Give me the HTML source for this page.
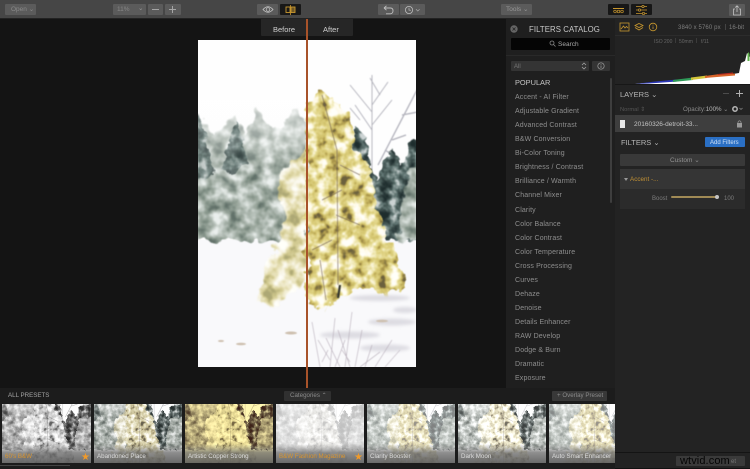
<!DOCTYPE html>
<html><head><meta charset="utf-8">
<style>
*{box-sizing:border-box;margin:0;padding:0}
html,body{width:750px;height:469px;overflow:hidden;background:#141414}
body{font-family:"Liberation Sans",sans-serif;position:relative;color:#999}
#r{position:absolute;left:0;top:0;width:750px;height:469px;filter:blur(.35px);overflow:hidden}
.a{position:absolute}
.b{position:absolute;background:#5b5b5b;border-radius:1px;height:11px;top:4px}
.t{position:absolute;white-space:nowrap;line-height:10px}
.it{position:absolute;left:515px;font-size:7px;color:#8e8e8e;line-height:10px;white-space:nowrap;letter-spacing:.02em}
.th{position:absolute;top:404px;height:59px;overflow:hidden;background:#ddd}
.th svg{position:absolute;left:0;top:0}
.th .g{position:absolute;left:0;right:0;bottom:0;height:19px;background:linear-gradient(rgba(110,110,110,0),rgba(105,105,105,.75) 45%,rgba(90,90,90,.9))}
.th .l{position:absolute;left:3px;bottom:2px;font-size:6.200px;line-height:8px;color:#ddd;white-space:nowrap}
.th .o{color:#d8942f}
.th .s{position:absolute;right:1px;bottom:0;color:#f09a2a;font-size:10px;line-height:11px}
</style></head><body>
<div id="r">
<!-- toolbar -->
<div class="a" style="left:0;top:0;width:750px;height:18px;background:#464646"></div>
<div class="a" style="left:0;top:18px;width:750px;height:1px;background:#222"></div>
<div class="b" style="left:5px;width:31px"></div><div class="t" style="left:11px;top:5px;font-size:6.500px;color:#8a8a8a">Open ⌄</div>
<div class="b" style="left:113px;width:33px"></div><div class="t" style="left:117px;top:5px;font-size:6.500px;color:#888">11%</div><div class="t" style="left:138px;top:4px;font-size:6.500px;color:#999">⌄</div>
<div class="b" style="left:148px;width:15px"></div><div class="a" style="left:152px;top:9px;width:7px;height:1px;background:#a5a5a5"></div>
<div class="b" style="left:165px;width:16px"></div><div class="a" style="left:169px;top:9px;width:7px;height:1px;background:#a5a5a5"></div><div class="a" style="left:172px;top:6px;width:1px;height:7px;background:#a5a5a5"></div>
<div class="b" style="left:257px;width:21px"></div>
<svg class="a" style="left:262px;top:5px" width="12" height="9" viewBox="0 0 12 9"><path d="M1 4.500Q6 -1 11 4.500Q6 10 1 4.500Z" fill="none" stroke="#c8c8c8" stroke-width=".8"/><circle cx="6" cy="4.500" r="1.800" fill="none" stroke="#c8c8c8" stroke-width=".7"/></svg>
<div class="b" style="left:280px;width:21px;background:#181818"></div>
<svg class="a" style="left:285px;top:5px" width="11" height="10" viewBox="0 0 11 10"><rect x="1" y="2" width="4" height="5.500" fill="none" stroke="#c9982f" stroke-width=".9"/><rect x="6" y="2" width="4" height="5.500" fill="#c9982f" fill-opacity=".5" stroke="#c9982f" stroke-width=".9"/><path d="M5.500 0V10" stroke="#c9982f" stroke-width=".8"/></svg>
<div class="b" style="left:378px;width:21px"></div>
<svg class="a" style="left:383px;top:5px" width="11" height="10" viewBox="0 0 11 10"><path d="M1 3H7.500Q10 3 10 5.800T7.500 8.800H3M1 3L3.500 .8M1 3L3.500 5.200" fill="none" stroke="#bdbdbd" stroke-width=".9"/></svg>
<div class="b" style="left:400px;width:25px"></div>
<svg class="a" style="left:404px;top:5px" width="18" height="10" viewBox="0 0 18 10"><circle cx="5" cy="5" r="3.600" fill="none" stroke="#bdbdbd" stroke-width=".8"/><path d="M5 2.800V5.200H7" fill="none" stroke="#bdbdbd" stroke-width=".7"/><path d="M12 4.300L13.800 6L15.600 4.300" fill="none" stroke="#aaa" stroke-width=".7"/></svg>
<div class="b" style="left:501px;width:31px"></div><div class="t" style="left:506px;top:5px;font-size:6.500px;color:#979797">Tools ⌄</div>
<div class="b" style="left:608px;width:21px;background:#171717"></div>
<svg class="a" style="left:613px;top:6px" width="11" height="8" viewBox="0 0 11 8"><path d="M0 2.500H11" stroke="#c9982f"/><circle cx="2" cy="5.500" r="1.300" fill="none" stroke="#c9982f" stroke-width=".7"/><circle cx="5.500" cy="5.500" r="1.300" fill="none" stroke="#c9982f" stroke-width=".7"/><circle cx="9" cy="5.500" r="1.300" fill="none" stroke="#c9982f" stroke-width=".7"/></svg>
<div class="b" style="left:631px;width:21px;background:#171717"></div>
<svg class="a" style="left:636px;top:5px" width="11" height="10" viewBox="0 0 11 10"><path d="M0 1.500H11M0 5H11M0 8.500H11" stroke="#c9982f" stroke-width=".8"/><circle cx="7" cy="1.500" r="1.200" fill="#222" stroke="#c9982f" stroke-width=".7"/><circle cx="3.500" cy="5" r="1.200" fill="#222" stroke="#c9982f" stroke-width=".7"/><circle cx="7.500" cy="8.500" r="1.200" fill="#222" stroke="#c9982f" stroke-width=".7"/></svg>
<div class="b" style="left:729px;width:16px;height:12px"></div>
<svg class="a" style="left:732px;top:5px" width="10" height="11" viewBox="0 0 10 11"><path d="M3 4H1.500V10H8.500V4H7M5 7V.8M3.200 2.500L5 .8L6.800 2.500" fill="none" stroke="#c4c4c4" stroke-width=".8"/></svg>

<!-- before/after -->
<div class="a" style="left:261px;top:19px;width:92px;height:17px;background:#262626;border-radius:0 0 1px 1px"></div>
<div class="t" style="left:273px;top:25px;font-size:7.500px;color:#cfcfcf">Before</div>
<div class="t" style="left:323px;top:25px;font-size:7.500px;color:#cfcfcf">After</div>

<!-- photo -->
<svg class="a" style="left:198px;top:40px" width="218" height="327" viewBox="198 40 218 327">
<defs>
<linearGradient id="haze" x1="0" y1="0" x2="0" y2="1"><stop offset="0" stop-color="#fff" stop-opacity=".7"/><stop offset=".5" stop-color="#fff" stop-opacity=".15"/><stop offset="1" stop-color="#fff" stop-opacity="0"/></linearGradient>
<filter id="b1" x="-20%" y="-20%" width="140%" height="140%"><feGaussianBlur stdDeviation="1.600"/></filter>
<filter id="b2" x="-20%" y="-20%" width="140%" height="140%"><feGaussianBlur stdDeviation=".5"/></filter>
<!-- yellow foliage -->
<filter id="fy" x="-10%" y="-10%" width="120%" height="120%" color-interpolation-filters="sRGB">
 <feTurbulence type="fractalNoise" baseFrequency=".085" numOctaves="3" seed="4" result="n"/>
 <feColorMatrix in="n" values="1.900 0 0 0 -.45  1.900 0 0 0 -.45  1.900 0 0 0 -.45  0 0 0 0 1"/>
 <feComponentTransfer result="c"><feFuncR type="table" tableValues=".42 .68 .82 .88 .94 1 1"/><feFuncG type="table" tableValues=".38 .6 .76 .83 .91 .98 1"/><feFuncB type="table" tableValues=".24 .3 .42 .52 .7 .9 .98"/></feComponentTransfer>
 <feDisplacementMap in="SourceGraphic" in2="n" scale="14" xChannelSelector="G" yChannelSelector="B" result="s"/>
 <feComposite in="c" in2="s" operator="in"/>
 <feGaussianBlur stdDeviation=".6"/>
</filter>
<!-- pale yellow foliage -->
<filter id="fp" x="-10%" y="-10%" width="120%" height="120%" color-interpolation-filters="sRGB">
 <feTurbulence type="fractalNoise" baseFrequency=".08" numOctaves="3" seed="21" result="n"/>
 <feColorMatrix in="n" values="1.900 0 0 0 -.45  1.900 0 0 0 -.45  1.900 0 0 0 -.45  0 0 0 0 1"/>
 <feComponentTransfer result="c"><feFuncR type="table" tableValues=".68 .8 .88 .94 .98 1"/><feFuncG type="table" tableValues=".66 .77 .85 .92 .97 1"/><feFuncB type="table" tableValues=".46 .54 .66 .8 .92 .98"/></feComponentTransfer>
 <feDisplacementMap in="SourceGraphic" in2="n" scale="14" xChannelSelector="G" yChannelSelector="B" result="s"/>
 <feComposite in="c" in2="s" operator="in"/>
 <feGaussianBlur stdDeviation=".7"/>
</filter>
<!-- frosty forest -->
<filter id="ff" x="-10%" y="-10%" width="120%" height="120%" color-interpolation-filters="sRGB">
 <feTurbulence type="fractalNoise" baseFrequency=".08" numOctaves="3" seed="12" result="n"/>
 <feColorMatrix in="n" values="1.900 0 0 0 -.45  1.900 0 0 0 -.45  1.900 0 0 0 -.45  0 0 0 0 1"/>
 <feComponentTransfer result="c"><feFuncR type="table" tableValues=".38 .5 .6 .7 .82 .92"/><feFuncG type="table" tableValues=".44 .56 .65 .74 .85 .94"/><feFuncB type="table" tableValues=".41 .52 .61 .71 .83 .93"/></feComponentTransfer>
 <feDisplacementMap in="SourceGraphic" in2="n" scale="12" xChannelSelector="G" yChannelSelector="B" result="s"/>
 <feComposite in="c" in2="s" operator="in"/>
 <feGaussianBlur stdDeviation=".8"/>
</filter>
<!-- dark forest -->
<filter id="fd" x="-10%" y="-10%" width="120%" height="120%" color-interpolation-filters="sRGB">
 <feTurbulence type="fractalNoise" baseFrequency=".1" numOctaves="3" seed="33" result="n"/>
 <feColorMatrix in="n" values="1.900 0 0 0 -.45  1.900 0 0 0 -.45  1.900 0 0 0 -.45  0 0 0 0 1"/>
 <feComponentTransfer result="c"><feFuncR type="table" tableValues=".12 .18 .26 .38 .56 .8"/><feFuncG type="table" tableValues=".18 .24 .33 .46 .62 .83"/><feFuncB type="table" tableValues=".18 .24 .32 .45 .61 .83"/></feComponentTransfer>
 <feDisplacementMap in="SourceGraphic" in2="n" scale="10" xChannelSelector="G" yChannelSelector="B" result="s"/>
 <feComposite in="c" in2="s" operator="in"/>
 <feGaussianBlur stdDeviation=".6"/>
</filter>
<g id="scene">
 <rect x="100" y="0" width="420" height="400" fill="#fefefe"/>
 <rect x="100" y="240" width="420" height="130" fill="#f9f9fb"/>
 <!-- left forest -->
 <g filter="url(#ff)">
  <path d="M150 125L198 118L215 135L235 116L246 135L256 108L272 130L284 125L296 110L308 125V240H150Z" fill="#888"/>
 </g>
 <rect x="150" y="100" width="160" height="120" fill="url(#haze)"/>
 <g filter="url(#fd)" opacity=".72">
  <path d="M170 130L198 112L204 130L214 172L203 184L170 190Z" fill="#000"/>
  <path d="M235 118L242 140L247 162L232 175L222 170L228 145Z" fill="#000"/>
 </g>
 <g filter="url(#ff)" opacity=".9">
  <path d="M180 190L205 178L218 182L228 208L224 240H180Z" fill="#888"/>
  <path d="M235 205L252 165L268 195L280 240H225Z" fill="#888"/>
 </g>
 <!-- bare trees -->
 <g filter="url(#b2)" stroke="#a5a5b0" fill="none" stroke-width=".9" opacity=".85">
  <path d="M372 170V75M372 112L350 85M372 105L388 82M372 130L355 105M372 125L392 100M362 150L345 130M360 120L350 108M380 95L370 78"/>
  <path d="M378 165L418 88M392 140L406 135M402 115L418 112M385 150L400 160" stroke-width="1.300"/>
 </g>
 <!-- right forest -->
 <g filter="url(#fd)">
  <path d="M354 125L366 138L372 172L378 180L392 146L402 165L412 138L450 135V240H378L370 215L352 190Z" fill="#000"/>
 </g>
 <g filter="url(#ff)">
  <path d="M398 240L403 195L412 168L450 165V240Z" fill="#888"/>
 </g>
 <!-- left-side tree part -->
 <g filter="url(#fp)">
  <path d="M308 145L292 160L280 174L278 195L284 215L280 232L274 250L264 275L258 300L272 304L292 294L308 280Z" fill="#000"/>
 </g>
 <!-- main tree -->
 <g filter="url(#fy)">
  <path d="M306 100L318 92L333 98L344 110L352 124L356 150L372 170L377 208L383 235L398 255L404 290L390 294L355 290L345 296L325 308L306 302Z" fill="#000"/>
 </g>
 <g filter="url(#b2)">
  <path d="M340 285L338 298" stroke="#33362e" stroke-width="2.200"/>
  <path d="M337 150L338 285M322 95L337 150M322 200L342 190M340 165L360 175M320 260L326 300M336 215L360 225M332 240L312 250" stroke="#6d5c50" stroke-width=".8" fill="none" opacity=".75"/>
 </g>
 <g filter="url(#b1)" fill="#dddce2">
  <ellipse cx="380" cy="298" rx="30" ry="3"/><ellipse cx="392" cy="322" rx="24" ry="3.500"/><ellipse cx="350" cy="335" rx="30" ry="3.500"/><ellipse cx="385" cy="348" rx="25" ry="3.500"/><ellipse cx="405" cy="310" rx="12" ry="3"/>
 </g>
 <g filter="url(#b2)" stroke="#b3a9b5" stroke-width=".55" fill="none"><path d="M320 367L312 322M330 367L335 318M345 367L352 312M355 367L362 330M365 367L372 345M340 367L326 338M375 367L392 340M318 340L330 360M335 367L345 340M350 367L338 330M360 367L380 352M328 350L322 362M342 350L350 362M385 367L400 350"/></g>
 <g filter="url(#b2)" fill="#cdbfae">
  <ellipse cx="291" cy="333" rx="6" ry="1.500"/><ellipse cx="241" cy="344" rx="5" ry="1.200"/><ellipse cx="221" cy="341" rx="3" ry="1"/><ellipse cx="382" cy="321" rx="6" ry="1.200"/>
 </g>
</g>
<filter id="bw"><feColorMatrix type="saturate" values="0"/></filter>
<filter id="ab"><feColorMatrix type="saturate" values=".55"/></filter>
<filter id="cu"><feColorMatrix values=".95 .1 0 0 .03 .85 .1 0 0 .0 .3 .1 .05 0 0 0 0 0 1 0"/></filter>
<filter id="hi"><feColorMatrix type="saturate" values=".1"/><feComponentTransfer><feFuncR type="linear" slope=".5" intercept=".52"/><feFuncG type="linear" slope=".5" intercept=".52"/><feFuncB type="linear" slope=".5" intercept=".52"/></feComponentTransfer></filter>
<filter id="cl"><feColorMatrix type="saturate" values=".7"/><feComponentTransfer><feFuncR type="linear" slope=".85" intercept=".2"/><feFuncG type="linear" slope=".85" intercept=".2"/><feFuncB type="linear" slope=".85" intercept=".2"/></feComponentTransfer></filter>
<filter id="dm"><feColorMatrix type="saturate" values=".4"/><feComponentTransfer><feFuncR type="linear" slope="1.200" intercept=".02"/><feFuncG type="linear" slope="1.200" intercept=".02"/><feFuncB type="linear" slope="1.200" intercept=".02"/></feComponentTransfer></filter>
</defs>
<use href="#scene"/>
</svg>
<div class="a" style="left:306px;top:19px;width:2px;height:369px;background:#a8532a"></div>

<!-- filters catalog panel -->
<div class="a" style="left:506px;top:19px;width:109px;height:369px;background:#1f1f1f"></div>
<svg class="a" style="left:510px;top:25px" width="8" height="8" viewBox="0 0 8 8"><circle cx="4" cy="4" r="3.700" fill="#666"/><path d="M2.500 2.500L5.500 5.500M5.500 2.500L2.500 5.500" stroke="#222" stroke-width=".8"/></svg>
<div class="t" style="left:529px;top:25px;font-size:7.800px;color:#c8c8c8;letter-spacing:.01em">FILTERS CATALOG</div>
<div class="a" style="left:511px;top:38px;width:99px;height:12px;background:#050505;border-radius:1px"></div>
<svg class="a" style="left:549px;top:40px" width="7" height="7" viewBox="0 0 7 7"><circle cx="3" cy="3" r="2" fill="none" stroke="#888" stroke-width=".8"/><path d="M4.500 4.500L6.500 6.500" stroke="#888" stroke-width=".8"/></svg>
<div class="t" style="left:558px;top:40px;font-size:6.500px;color:#a8a8a8">Search</div>
<div class="a" style="left:506px;top:55px;width:109px;height:1px;background:#292929"></div>
<div class="a" style="left:511px;top:61px;width:78px;height:10px;background:#343434;border-radius:1px"></div>
<div class="t" style="left:514px;top:62px;font-size:6px;color:#777">All</div>
<svg class="a" style="left:581px;top:62px" width="6" height="8" viewBox="0 0 6 8"><path d="M1 3L3 1L5 3M1 5L3 7L5 5" fill="none" stroke="#aaa" stroke-width=".7"/></svg>
<div class="a" style="left:592px;top:61px;width:18px;height:10px;background:#343434;border-radius:1px"></div>
<svg class="a" style="left:597px;top:62px" width="8" height="8" viewBox="0 0 8 8"><circle cx="4" cy="4" r="3.200" fill="none" stroke="#a0a0a0" stroke-width=".7"/><path d="M4 3.500V6M4 2V2.800" stroke="#a0a0a0" stroke-width=".7"/></svg>
<div class="t" style="left:515px;top:78px;font-size:7.400px;color:#c4c4c4">POPULAR</div>
<div class="a" style="left:610px;top:78px;width:2px;height:125px;background:#3e3e3e;border-radius:1px"></div>
<div class="it" style="top:93px">Accent - AI Filter</div>
<div class="it" style="top:107px">Adjustable Gradient</div>
<div class="it" style="top:121px">Advanced Contrast</div>
<div class="it" style="top:135px">B&amp;W Conversion</div>
<div class="it" style="top:149px">Bi-Color Toning</div>
<div class="it" style="top:163px">Brightness / Contrast</div>
<div class="it" style="top:177px">Brilliance / Warmth</div>
<div class="it" style="top:191px">Channel Mixer</div>
<div class="it" style="top:206px">Clarity</div>
<div class="it" style="top:220px">Color Balance</div>
<div class="it" style="top:234px">Color Contrast</div>
<div class="it" style="top:248px">Color Temperature</div>
<div class="it" style="top:262px">Cross Processing</div>
<div class="it" style="top:276px">Curves</div>
<div class="it" style="top:290px">Dehaze</div>
<div class="it" style="top:304px">Denoise</div>
<div class="it" style="top:318px">Details Enhancer</div>
<div class="it" style="top:332px">RAW Develop</div>
<div class="it" style="top:346px">Dodge &amp; Burn</div>
<div class="it" style="top:360px">Dramatic</div>
<div class="it" style="top:374px">Exposure</div>

<!-- right panel -->
<div class="a" style="left:615px;top:19px;width:135px;height:450px;background:#232323"></div>
<svg class="a" style="left:619px;top:22px" width="45" height="11" viewBox="0 0 45 11" fill="none" stroke="#c9982f" stroke-width=".8"><rect x="1" y="1" width="9" height="8"/><path d="M2 7L4.500 4L6 6L7.500 4.500L9 6"/><path d="M20 1.500L24 3.500L20 5.500L16 3.500ZM16 5.500L20 8L24 5.500"/><circle cx="34" cy="5" r="3.800"/><path d="M34 4.500V7M34 2.800V3.500"/></svg>
<div class="t" style="left:678px;top:23px;font-size:6px;color:#7f7f7f;letter-spacing:.02em">3840 x 5760 px</div>
<div class="a" style="left:725px;top:24px;width:1px;height:6px;background:#444"></div>
<div class="t" style="left:729px;top:23px;font-size:6px;color:#7f7f7f">16-bit</div>
<div class="a" style="left:615px;top:35px;width:135px;height:1px;background:#2c2c2c"></div>
<div class="t" style="left:654px;top:37px;font-size:5px;color:#666">ISO 200</div>
<div class="a" style="left:675px;top:38px;width:1px;height:5px;background:#3b3b3b"></div>
<div class="t" style="left:679px;top:37px;font-size:5px;color:#666">50mm</div>
<div class="a" style="left:696px;top:38px;width:1px;height:5px;background:#3b3b3b"></div>
<div class="t" style="left:701px;top:37px;font-size:5px;color:#666">f/11</div>
<svg class="a" style="left:615px;top:45px" width="135" height="39" viewBox="0 0 135 39">
<path d="M20 39Q50 36 70 34T112 30L124 28L126 18L130 16L132 8L135 12V39Z" fill="#fff"/>
<path d="M20 39L40 36.500L62 34.500V36.500L34 38.500Z" fill="#2a35b5"/>
<path d="M58 35L78 32.500V35L58 37Z" fill="#2e9a58"/>
<path d="M76 32.500L92 30.500V33L76 35Z" fill="#d3c53a"/>
<path d="M90 31L105 29L120 28.500V30.500L90 33Z" fill="#d8642a"/>
<path d="M103 29L118 27.500V28.800L103 30Z" fill="#b32a20"/>
<path d="M132.500 9L133.500 7L134.500 9V16H132.500Z" fill="#5caf48"/>
</svg>
<div class="a" style="left:615px;top:84px;width:135px;height:1px;background:#171717"></div>
<div class="t" style="left:620px;top:90px;font-size:7.500px;color:#b6b6b6">LAYERS ⌄</div>
<div class="a" style="left:723px;top:93px;width:6px;height:1px;background:#4c4c4c"></div>
<div class="a" style="left:736px;top:93px;width:7px;height:1px;background:#b0b0b0"></div><div class="a" style="left:739px;top:90px;width:1px;height:7px;background:#b0b0b0"></div>
<div class="t" style="left:620px;top:105px;font-size:5.800px;color:#555">Normal ⇕</div>
<div class="t" style="left:683px;top:105px;font-size:6.200px;color:#8a8a8a">Opacity:<span style="color:#b8b8b8">100%</span> ⌄</div>
<svg class="a" style="left:731px;top:105px" width="12" height="8" viewBox="0 0 12 8"><circle cx="4" cy="4" r="2.200" fill="none" stroke="#b5b5b5" stroke-width="1.500"/><path d="M8.500 3L10 4.500L11.500 3" fill="none" stroke="#999" stroke-width=".6"/></svg>
<div class="a" style="left:615px;top:115px;width:135px;height:17px;background:#3e3e3e"></div>
<div class="a" style="left:620px;top:120px;width:5px;height:8px;background:#e8e8e8"></div>
<div class="t" style="left:634px;top:120px;font-size:6.500px;color:#c4c4c4">20160326-detroit-33...</div>
<svg class="a" style="left:736px;top:120px" width="7" height="8" viewBox="0 0 7 8"><rect x="1" y="3" width="5" height="4.500" fill="#9a9a9a"/><path d="M2 3V2Q3.500 -.5 5 2V3" fill="none" stroke="#9a9a9a" stroke-width=".7"/></svg>
<div class="t" style="left:621px;top:138px;font-size:7.500px;color:#b6b6b6">FILTERS ⌄</div>
<div class="a" style="left:705px;top:137px;width:40px;height:10px;background:#2a6fc4;border-radius:1px"></div>
<div class="t" style="left:710px;top:138px;font-size:6px;color:#cfe0f5">Add Filters</div>
<div class="a" style="left:620px;top:154px;width:125px;height:12px;background:#393939;border-radius:1px"></div>
<div class="t" style="left:670px;top:156px;font-size:6.500px;color:#929292">Custom ⌄</div>
<div class="a" style="left:620px;top:169px;width:125px;height:20px;background:#353535"></div>
<div class="a" style="left:620px;top:189px;width:125px;height:20px;background:#2b2b2b"></div>
<div class="a" style="left:624px;top:178px;width:0;height:0;border-left:2px solid transparent;border-right:2px solid transparent;border-top:3px solid #999"></div>
<div class="t" style="left:630px;top:175px;font-size:6.300px;color:#c09035">Accent -...</div>
<div class="t" style="left:652px;top:194px;font-size:6px;color:#7c7c7c">Boost</div>
<div class="a" style="left:671px;top:196px;width:47px;height:2px;background:#a08a55;border-radius:1px"></div>
<div class="a" style="left:715px;top:195px;width:4px;height:4px;background:#c4c4c4;border-radius:50%"></div>
<div class="t" style="left:724px;top:194px;font-size:6px;color:#7c7c7c">100</div>
<div class="a" style="left:615px;top:452px;width:135px;height:1px;background:#141414"></div>
<div class="a" style="left:615px;top:468px;width:135px;height:1px;background:#111"></div>
<div class="a" style="left:676px;top:456px;width:69px;height:10px;background:#3a3a3a;border-radius:1px"></div>
<div class="t" style="left:680px;top:456px;font-size:11px;color:#050505;letter-spacing:.1px">wtvid.com</div>
<div class="t" style="left:731px;top:457px;font-size:6px;color:#777">et</div>

<!-- bottom strip -->
<div class="a" style="left:0;top:388px;width:615px;height:81px;background:#1c1c1c"></div>
<div class="t" style="left:8px;top:391px;font-size:6.200px;color:#a5a5a5">ALL PRESETS</div>
<div class="a" style="left:284px;top:391px;width:47px;height:10px;background:#303030;border-radius:1px"></div>
<div class="t" style="left:290px;top:391px;font-size:6.200px;color:#8a8a8a">Categories ⌃</div>
<div class="a" style="left:552px;top:391px;width:55px;height:10px;background:#383838;border-radius:1px"></div>
<div class="t" style="left:557px;top:391px;font-size:6.200px;color:#8a8a8a">+ Overlay Preset</div>
<div class="a" style="left:0;top:465px;width:70px;height:1px;background:#444"></div>

<div class="th" style="left:2px;width:89px"><svg width="89" height="59" viewBox="232 135 205 136" preserveAspectRatio="none"><use href="#scene" filter="url(#bw)"/></svg><div class="g"></div><div class="l o">60's B&amp;W</div><div class="s">★</div></div>
<div class="th" style="left:94px;width:88px"><svg width="88" height="59" viewBox="232 135 205 136" preserveAspectRatio="none"><use href="#scene" filter="url(#ab)"/></svg><div class="g"></div><div class="l">Abandoned Place</div></div>
<div class="th" style="left:185px;width:88px"><svg width="88" height="59" viewBox="232 135 205 136" preserveAspectRatio="none"><use href="#scene" filter="url(#cu)"/></svg><div class="g"></div><div class="l">Artistic Copper Strong</div></div>
<div class="th" style="left:276px;width:88px"><svg width="88" height="59" viewBox="232 135 205 136" preserveAspectRatio="none"><use href="#scene" filter="url(#hi)"/></svg><div class="g"></div><div class="l o">B&amp;W Fashion Magazine</div><div class="s">★</div></div>
<div class="th" style="left:367px;width:88px"><svg width="88" height="59" viewBox="232 135 205 136" preserveAspectRatio="none"><use href="#scene" filter="url(#cl)"/></svg><div class="g"></div><div class="l">Clarity Booster</div></div>
<div class="th" style="left:458px;width:88px"><svg width="88" height="59" viewBox="232 135 205 136" preserveAspectRatio="none"><use href="#scene" filter="url(#dm)"/></svg><div class="g"></div><div class="l">Dark Moon</div></div>
<div class="th" style="left:549px;width:66px"><svg width="88" height="59" viewBox="232 135 205 136" preserveAspectRatio="none"><use href="#scene" filter="url(#cl)"/></svg><div class="g"></div><div class="l">Auto Smart Enhancer</div></div>
</div>
</body></html>
